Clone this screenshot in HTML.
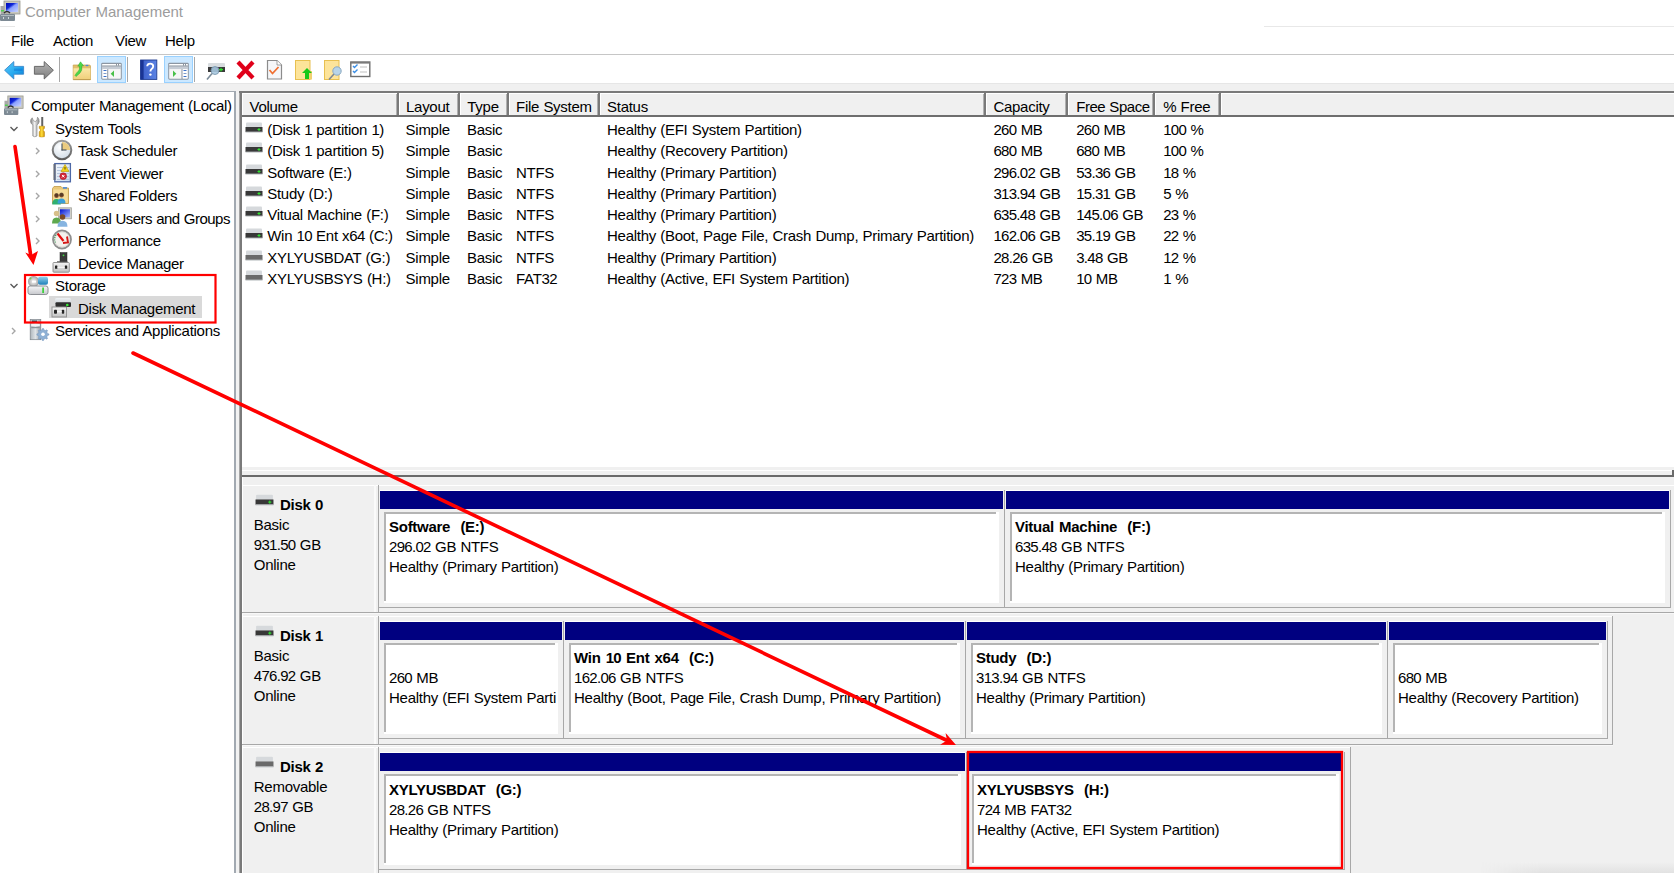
<!DOCTYPE html>
<html><head><meta charset="utf-8"><style>
html,body{margin:0;padding:0;}
body{width:1674px;height:873px;overflow:hidden;position:relative;background:#fff;font-family:"Liberation Sans",sans-serif;font-size:15px;color:#000;}
body div, body svg{position:absolute;}
.t{white-space:nowrap;line-height:17px;letter-spacing:-0.27px;word-spacing:0.4px;}
.n{letter-spacing:-0.7px;}
</style></head><body>
<svg style="left:0px;top:0px;" width="22" height="22" viewBox="0 0 22 22"><defs><linearGradient id="scr" x1="0" y1="0" x2="1" y2="1"><stop offset="0" stop-color="#0008b8"/><stop offset="0.35" stop-color="#1028d8"/><stop offset="0.5" stop-color="#8aa0ff"/><stop offset="1" stop-color="#c8d4ff"/></linearGradient></defs><rect x="4" y="1" width="16" height="13" fill="#c8c8c0" stroke="#9a9a90" stroke-width="0.8"/><rect x="6" y="3" width="12" height="9" fill="url(#scr)"/><rect x="0.5" y="6" width="4" height="8" fill="#a8a8a8"/><rect x="1" y="10" width="3" height="1.5" fill="#50d050"/><path d="M4 13 Q7 10 10 13" stroke="#303030" stroke-width="1.5" fill="none"/><rect x="0" y="14" width="15" height="7" rx="1" fill="#7d8a94"/><rect x="1" y="15" width="13" height="1" fill="#b0bac0"/><rect x="3" y="17" width="1" height="2" fill="#d0d8dc"/><rect x="8" y="17" width="1" height="2" fill="#d0d8dc"/></svg><div class="t" style="left:25px;top:3px;color:#9c9c9c;letter-spacing:0;">Computer Management</div><div style="left:0px;top:26px;width:15px;height:1px;background:#e6e6e6;"></div><div style="left:1264px;top:26px;width:410px;height:1px;background:#e8e8e8;"></div><div class="t" style="left:11px;top:32px;">File</div><div class="t" style="left:53px;top:32px;">Action</div><div class="t" style="left:115px;top:32px;">View</div><div class="t" style="left:165px;top:32px;">Help</div><div style="left:0px;top:54px;width:1674px;height:1px;background:#c6c6c6;"></div><svg style="left:4px;top:61px;" width="21" height="19" viewBox="0 0 21 19"><defs><linearGradient id="bk" x1="0" y1="0" x2="1" y2="1"><stop offset="0" stop-color="#5ccaf8"/><stop offset="0.6" stop-color="#22a6ee"/><stop offset="1" stop-color="#0a78d0"/></linearGradient></defs><path d="M0.6 9.2 L9.8 0.6 L9.8 5.4 L19.6 5.4 L19.6 13.2 L9.8 13.2 L9.8 18 Z" fill="url(#bk)" stroke="#3a88cc" stroke-width="0.9" stroke-linejoin="round"/><rect x="10" y="7.5" width="8.5" height="2.5" fill="#0a6ed0" opacity="0.45"/></svg><svg style="left:33px;top:61px;" width="21" height="19" viewBox="0 0 21 19"><defs><linearGradient id="fw" x1="0" y1="0" x2="0" y2="1"><stop offset="0" stop-color="#b4b4b4"/><stop offset="1" stop-color="#7e7e7e"/></linearGradient></defs><path d="M20.4 9.2 L11.2 0.6 L11.2 5.4 L1.4 5.4 L1.4 13.2 L11.2 13.2 L11.2 18 Z" fill="url(#fw)" stroke="#5e5e5e" stroke-width="0.9" stroke-linejoin="round"/></svg><div style="left:59px;top:57px;width:1px;height:25px;background:#a8a8a8;"></div><svg style="left:72px;top:61px;" width="20" height="20" viewBox="0 0 20 20"><defs><linearGradient id="fuf" x1="0" y1="0" x2="0" y2="1"><stop offset="0" stop-color="#fbe7a6"/><stop offset="1" stop-color="#f0cf7a"/></linearGradient></defs><path d="M1.2 4 L17.8 4 L18.5 5 L18.5 18.7 L1.2 18.7 Z" fill="#e2bf6a" stroke="#c9a24e" stroke-width="0.7"/><rect x="1.5" y="7.3" width="16.8" height="11.2" fill="url(#fuf)"/><rect x="1.3" y="18" width="17.2" height="0.8" fill="#b8954a"/><ellipse cx="15" cy="4.5" rx="1.6" ry="0.8" fill="#4a88d8"/><path d="M3 14.5 Q4.5 11.5 6.5 10 Q8 8.5 7.5 5 L5.8 5.2 L8.5 0.8 L11.5 4.8 L9.8 4.8 Q10.5 9.5 8 12 Q6 13.8 4 15.5 Z" fill="#4ad84a" stroke="#2aa82a" stroke-width="0.5"/></svg><div style="left:97px;top:56px;width:29px;height:27px;background:#cce8ff;box-sizing:border-box;border:1px solid #99d1ff;"></div><svg style="left:101px;top:62px;" width="22" height="19" viewBox="0 0 22 19"><rect x="0.8" y="1.3" width="19.4" height="15.8" rx="0.8" fill="#f2f2f2" stroke="#8c96a2" stroke-width="1.2"/><rect x="1.4" y="2" width="18.2" height="1.6" fill="#ffffff"/><rect x="1.4" y="3.6" width="18.2" height="1" fill="#6e7a88"/><rect x="1.4" y="4.6" width="18.2" height="2.6" fill="#c6ccd4"/><rect x="15" y="2" width="0.8" height="1.6" fill="#6e7a88"/><rect x="17" y="2" width="0.8" height="1.6" fill="#6e7a88"/><rect x="1.4" y="7.2" width="5" height="9.3" fill="#ffffff"/><rect x="6.4" y="7.2" width="1" height="9.5" fill="#6e7a88"/><rect x="7.4" y="7.2" width="12.2" height="9.3" fill="#f6f6f6"/><rect x="2.5" y="8" width="3" height="1" fill="#3a70c8"/><rect x="2.5" y="11" width="3" height="1" fill="#7d9ccc"/><rect x="2.5" y="14" width="3" height="1" fill="#3a70c8"/><path d="M13 8.5 L9.7 11.8 L13 15.1 Z" fill="#48c048"/></svg><div style="left:127px;top:57px;width:1px;height:25px;background:#a8a8a8;"></div><svg style="left:140px;top:59px;" width="18" height="21" viewBox="0 0 18 21"><defs><linearGradient id="hp" x1="0" y1="0" x2="1" y2="0"><stop offset="0" stop-color="#3a5cc8"/><stop offset="1" stop-color="#5c84e4"/></linearGradient></defs><rect x="0.6" y="1" width="16.2" height="19.4" fill="url(#hp)" stroke="#203c90" stroke-width="0.9"/><rect x="0.6" y="1" width="3" height="19.4" fill="#1a3494"/><path d="M7.2 7.2 Q7.4 4.6 10.2 4.6 Q13.2 4.6 13.2 7.3 Q13.2 9 11.6 10 Q10.4 10.8 10.4 12.6" fill="none" stroke="#ffffff" stroke-width="1.9"/><circle cx="10.4" cy="15.6" r="1.2" fill="#ffffff"/></svg><div style="left:164px;top:56px;width:29px;height:27px;background:#cce8ff;box-sizing:border-box;border:1px solid #99d1ff;"></div><svg style="left:168px;top:62px;" width="22" height="19" viewBox="0 0 22 19"><rect x="0.8" y="1.3" width="19.4" height="15.8" rx="0.8" fill="#f2f2f2" stroke="#8c96a2" stroke-width="1.2"/><rect x="1.4" y="2" width="18.2" height="1.6" fill="#ffffff"/><rect x="1.4" y="3.6" width="18.2" height="1" fill="#6e7a88"/><rect x="1.4" y="4.6" width="18.2" height="2.6" fill="#c6ccd4"/><rect x="15" y="2" width="0.8" height="1.6" fill="#6e7a88"/><rect x="17" y="2" width="0.8" height="1.6" fill="#6e7a88"/><rect x="1.4" y="7.2" width="12.2" height="9.3" fill="#f6f6f6"/><rect x="13.6" y="7.2" width="1" height="9.5" fill="#6e7a88"/><rect x="14.6" y="7.2" width="5" height="9.3" fill="#ffffff"/><rect x="15.5" y="8" width="3" height="1" fill="#3a70c8"/><rect x="15.5" y="11" width="3" height="1" fill="#7d9ccc"/><rect x="15.5" y="14" width="3" height="1" fill="#3a70c8"/><path d="M5 8.5 L8.3 11.8 L5 15.1 Z" fill="#48c048"/></svg><div style="left:194px;top:57px;width:1px;height:25px;background:#a8a8a8;"></div><svg style="left:206px;top:62px;" width="21" height="19" viewBox="0 0 21 19"><rect x="2" y="1" width="17" height="5" rx="1" fill="#d8dcdf"/><rect x="2" y="5" width="17" height="5" fill="#3a3a3a"/><rect x="13" y="7" width="4" height="1.2" fill="#30e030"/><rect x="14.4" y="5.8" width="1.2" height="3.6" fill="#30e030"/><circle cx="9" cy="8.5" r="4" fill="#a8c8e0" stroke="#7a98b0" stroke-width="1" opacity="0.9"/><line x1="6" y1="11.5" x2="1" y2="17.5" stroke="#7a8a98" stroke-width="1.6"/></svg><svg style="left:236px;top:60px;" width="19" height="20" viewBox="0 0 19 20"><path d="M2 2 L17 18 M17 2 L2 18" stroke="#e0001a" stroke-width="4.2"/></svg><svg style="left:266px;top:59px;" width="17" height="21" viewBox="0 0 17 21"><path d="M1.5 1.5 L11 1.5 L15.5 6 L15.5 20 L1.5 20 Z" fill="#f6f7f9" stroke="#8c8c8c" stroke-width="1.2"/><path d="M11 1.5 L11 6 L15.5 6" fill="#ffffff" stroke="#8c8c8c" stroke-width="0.8"/><path d="M3.5 11 L6.5 14.5 L12.5 8" fill="none" stroke="#f07032" stroke-width="1.8"/></svg><svg style="left:294px;top:59px;" width="19" height="21" viewBox="0 0 19 21"><rect x="1.5" y="1.5" width="14.5" height="19" fill="#fde49a" stroke="#e8c050" stroke-width="1"/><rect x="16" y="12" width="2" height="8.5" fill="#f0d070"/><path d="M13 9 L18 14 L15 14 L15 20 L11 20 L11 14 L8 14 Z" fill="#18c818"/></svg><svg style="left:323px;top:59px;" width="19" height="21" viewBox="0 0 19 21"><rect x="1.5" y="1.5" width="14.5" height="19" fill="#fde49a" stroke="#e8c050" stroke-width="1"/><line x1="11" y1="15" x2="6" y2="20.5" stroke="#808890" stroke-width="1.6"/><circle cx="14" cy="12" r="4.2" fill="#b8d4e8" stroke="#8aa8c0" stroke-width="1"/></svg><svg style="left:350px;top:61px;" width="21" height="17" viewBox="0 0 21 17"><rect x="0.8" y="1" width="19" height="14.5" fill="#ffffff" stroke="#6e6e6e" stroke-width="1.4"/><rect x="0.8" y="1" width="19" height="1.6" fill="#7a7a7a"/><path d="M3 5 L4.5 6.5 L7.5 3.5" fill="none" stroke="#3a8ee6" stroke-width="1.4"/><path d="M3 10 L4.5 11.5 L7.5 8.5" fill="none" stroke="#3a8ee6" stroke-width="1.4"/><rect x="10" y="5.5" width="7" height="1" fill="#c0c0c0"/><rect x="10" y="10.5" width="7" height="1" fill="#c0c0c0"/></svg><div style="left:0px;top:83px;width:1674px;height:8px;background:#f0f0f0;"></div><div style="left:0px;top:83px;width:1674px;height:1px;background:#e6e6e6;"></div><div style="left:0px;top:91px;width:236px;height:782px;background:#a2a9b1;"></div><div style="left:0px;top:92px;width:234px;height:781px;background:#ffffff;"></div><div style="left:236px;top:91px;width:4px;height:782px;background:#f2f2f2;"></div><svg style="left:4px;top:95px;" width="21" height="21" viewBox="0 0 22 22"><defs><linearGradient id="scr" x1="0" y1="0" x2="1" y2="1"><stop offset="0" stop-color="#0008b8"/><stop offset="0.35" stop-color="#1028d8"/><stop offset="0.5" stop-color="#8aa0ff"/><stop offset="1" stop-color="#c8d4ff"/></linearGradient></defs><rect x="4" y="1" width="16" height="13" fill="#c8c8c0" stroke="#9a9a90" stroke-width="0.8"/><rect x="6" y="3" width="12" height="9" fill="url(#scr)"/><rect x="0.5" y="6" width="4" height="8" fill="#a8a8a8"/><rect x="1" y="10" width="3" height="1.5" fill="#50d050"/><path d="M4 13 Q7 10 10 13" stroke="#303030" stroke-width="1.5" fill="none"/><rect x="0" y="14" width="15" height="7" rx="1" fill="#7d8a94"/><rect x="1" y="15" width="13" height="1" fill="#b0bac0"/><rect x="3" y="17" width="1" height="2" fill="#d0d8dc"/><rect x="8" y="17" width="1" height="2" fill="#d0d8dc"/></svg><div class="t" style="left:31px;top:97px;letter-spacing:-0.28px;">Computer Management (Local)</div><svg style="left:9px;top:126px;" width="10" height="6" viewBox="0 0 10 6"><polyline points="1.5,1 5,4.5 8.5,1" fill="none" stroke="#5a5a5a" stroke-width="1.4"/></svg><svg style="left:29px;top:116px;" width="17" height="22" viewBox="0 0 17 22"><defs><linearGradient id="wr" x1="0" y1="0" x2="1" y2="0"><stop offset="0" stop-color="#7c7c7c"/><stop offset="0.45" stop-color="#f2f2f2"/><stop offset="1" stop-color="#8a8a8a"/></linearGradient><linearGradient id="sd" x1="0" y1="0" x2="1" y2="0"><stop offset="0" stop-color="#d89a00"/><stop offset="0.5" stop-color="#ffe040"/><stop offset="1" stop-color="#c88800"/></linearGradient><linearGradient id="sh" x1="0" y1="0" x2="1" y2="0"><stop offset="0" stop-color="#9a9a9a"/><stop offset="1" stop-color="#4a4a4a"/></linearGradient></defs><path d="M3.2 1.8 Q1.2 3.5 1.6 6 Q2.2 8.2 3.8 8.8 L3.8 20 Q5.8 21.6 8 20 L8 8.8 Q9.8 8 10.2 5.6 Q10.4 3 8.5 1.2 L8 4.2 L6.2 5.6 L4.4 4.6 Z" fill="url(#wr)" stroke="#7a7a7a" stroke-width="0.6"/><rect x="12" y="1" width="2.2" height="9.5" fill="url(#sh)"/><path d="M10.2 10.2 L15.5 10.2 L15.5 12.3 L14.4 13.6 L14.4 14.6 L15.5 15.8 L15.5 20.6 Q12.9 21.6 10.2 20.6 L10.2 15.8 L11.3 14.6 L11.3 13.6 L10.2 12.3 Z" fill="url(#sd)" stroke="#b07800" stroke-width="0.4"/></svg><div class="t" style="left:55px;top:120px;">System Tools</div><svg style="left:35px;top:147px;" width="6" height="9" viewBox="0 0 6 9"><polyline points="1,1 4,4 1,7" fill="none" stroke="#a6a6a6" stroke-width="1.4"/></svg><svg style="left:51px;top:139px;" width="22" height="22" viewBox="0 0 22 22"><defs><radialGradient id="clf" cx="0.4" cy="0.35" r="0.7"><stop offset="0" stop-color="#ffffff"/><stop offset="1" stop-color="#cfdbe6"/></radialGradient><linearGradient id="clr" x1="0" y1="0" x2="0" y2="1"><stop offset="0" stop-color="#9a9a9a"/><stop offset="1" stop-color="#5e5e5e"/></linearGradient></defs><circle cx="11" cy="11" r="9.3" fill="url(#clf)" stroke="url(#clr)" stroke-width="2"/><path d="M11 11 L11 2.9 A8.1 8.1 0 0 1 19.1 11 Z" fill="#eacb80"/><line x1="11" y1="4.5" x2="11" y2="11.5" stroke="#46525e" stroke-width="1.1"/><line x1="10.5" y1="11" x2="15.5" y2="11" stroke="#46525e" stroke-width="1.1"/></svg><div class="t" style="left:78px;top:142px;">Task Scheduler</div><svg style="left:35px;top:170px;" width="6" height="9" viewBox="0 0 6 9"><polyline points="1,1 4,4 1,7" fill="none" stroke="#a6a6a6" stroke-width="1.4"/></svg><svg style="left:51px;top:162px;" width="22" height="22" viewBox="0 0 22 22"><defs><linearGradient id="evb" x1="0" y1="0" x2="1" y2="1"><stop offset="0" stop-color="#f4f8fc"/><stop offset="1" stop-color="#c8d8ec"/></linearGradient></defs><rect x="3.8" y="1.6" width="15.6" height="18.2" fill="url(#evb)" stroke="#4d68a6" stroke-width="1.3"/><rect x="6" y="5" width="12" height="0.8" fill="#a9bcd8"/><rect x="6" y="8" width="12" height="0.8" fill="#a9bcd8"/><rect x="6" y="11" width="12" height="0.8" fill="#a9bcd8"/><rect x="6" y="14" width="12" height="0.8" fill="#a9bcd8"/><rect x="6" y="17" width="12" height="0.8" fill="#a9bcd8"/><path d="M2 3h3M2 5h3M2 7h3M2 9h3M2 11h3M2 13h3M2 15h3M2 17h3" stroke="#5a5a5a" stroke-width="1"/><path d="M14 2.5 L18 9.5 L10 9.5 Z" fill="#f2d21a" stroke="#b89800" stroke-width="0.6"/><rect x="13.5" y="5" width="1" height="2.5" fill="#5a4a00"/><circle cx="12.2" cy="14.2" r="3.4" fill="#d42a3a" stroke="#a01020" stroke-width="0.5"/><path d="M11 13 L13.4 15.4 M13.4 13 L11 15.4" stroke="#fff" stroke-width="1"/></svg><div class="t" style="left:78px;top:165px;">Event Viewer</div><svg style="left:35px;top:192px;" width="6" height="9" viewBox="0 0 6 9"><polyline points="1,1 4,4 1,7" fill="none" stroke="#a6a6a6" stroke-width="1.4"/></svg><svg style="left:51px;top:184px;" width="22" height="22" viewBox="0 0 22 22"><path d="M1.5 4.5 L1.5 19.5 L17.5 19.5 L17.5 4 L11.5 4 L10 2.5 L3 2.5 Z" fill="#eac878" stroke="#c09a48" stroke-width="0.8"/><rect x="2.3" y="5.5" width="14.5" height="13.4" fill="#f6dc98"/><rect x="12" y="3" width="4" height="1.8" fill="#5a90d0"/><circle cx="5.5" cy="11.8" r="2.3" fill="#8a5530"/><circle cx="5.5" cy="11" r="2" fill="#3a2a20" opacity="0.6"/><circle cx="10.5" cy="11.3" r="2.3" fill="#8a5530"/><circle cx="10.5" cy="10.5" r="2" fill="#3a2a20" opacity="0.6"/><path d="M1.2 20.5 Q1.2 15 5.5 15 Q9.8 15 9.8 20.5 Z" fill="#2eb070"/><path d="M6.5 19.5 Q6.5 14.5 10.5 14.5 Q14.5 14.5 14.5 19.5 Z" fill="#3a9ed8"/></svg><div class="t" style="left:78px;top:187px;">Shared Folders</div><svg style="left:35px;top:215px;" width="6" height="9" viewBox="0 0 6 9"><polyline points="1,1 4,4 1,7" fill="none" stroke="#a6a6a6" stroke-width="1.4"/></svg><svg style="left:51px;top:207px;" width="22" height="22" viewBox="0 0 22 22"><rect x="7.5" y="0.8" width="13" height="11" fill="#cfcfc8" stroke="#a6a69e" stroke-width="0.8"/><defs><linearGradient id="usr" x1="0" y1="0" x2="1" y2="1"><stop offset="0" stop-color="#0010d0"/><stop offset="1" stop-color="#a8bcff"/></linearGradient></defs><rect x="9" y="2.3" width="10" height="8" fill="url(#usr)"/><circle cx="5.5" cy="6.5" r="2.7" fill="#d8c08a"/><path d="M1 16.5 Q1 10.5 5.5 10.5 Q10 10.5 10 16.5 Z" fill="#5ea84e"/><circle cx="11.5" cy="10" r="2.8" fill="#7a4a28"/><path d="M6.5 19.8 Q6.5 13.8 11.5 13.8 Q16.5 13.8 16.5 19.8 Z" fill="#86b4e0"/></svg><div class="t" style="left:78px;top:210px;letter-spacing:-0.5px;">Local Users and Groups</div><svg style="left:35px;top:237px;" width="6" height="9" viewBox="0 0 6 9"><polyline points="1,1 4,4 1,7" fill="none" stroke="#a6a6a6" stroke-width="1.4"/></svg><svg style="left:51px;top:229px;" width="22" height="22" viewBox="0 0 22 22"><circle cx="11" cy="10.5" r="9" fill="#f4f2ee" stroke="#8e8e8e" stroke-width="1.8"/><circle cx="11" cy="10.5" r="7.6" fill="none" stroke="#d6d6d2" stroke-width="0.8"/><path d="M4.5 13.5 A7 7 0 0 1 6 5" stroke="#3a9a5a" stroke-width="1.3" fill="none" stroke-dasharray="1 1.2"/><line x1="6.5" y1="4.5" x2="12.5" y2="12" stroke="#e41010" stroke-width="2.2"/><path d="M16 7.5 L17 13.5 L12 14" stroke="#d41818" stroke-width="1.9" fill="none"/></svg><div class="t" style="left:78px;top:232px;">Performance</div><svg style="left:51px;top:252px;" width="22" height="22" viewBox="0 0 22 22"><rect x="9" y="0.5" width="7" height="10" fill="#3a3a3a" stroke="#262626" stroke-width="0.5"/><circle cx="12.5" cy="3.3" r="0.9" fill="#40e040"/><rect x="6" y="9.3" width="10.5" height="1.4" fill="#555"/><defs><linearGradient id="dvb" x1="0" y1="0" x2="0" y2="1"><stop offset="0" stop-color="#f4f4f4"/><stop offset="1" stop-color="#c0c0c0"/></linearGradient></defs><rect x="2" y="10.5" width="16.3" height="9.7" rx="0.8" fill="url(#dvb)" stroke="#8a8a8a" stroke-width="0.9"/><rect x="4" y="13.5" width="2.4" height="3.3" rx="0.6" fill="#222"/><rect x="13.8" y="13.5" width="2.4" height="3.3" rx="0.6" fill="#222"/><rect x="6.4" y="14.8" width="7.4" height="0.9" fill="#fff"/></svg><div class="t" style="left:78px;top:255px;">Device Manager</div><svg style="left:9px;top:283px;" width="10" height="6" viewBox="0 0 10 6"><polyline points="1.5,1 5,4.5 8.5,1" fill="none" stroke="#5a5a5a" stroke-width="1.4"/></svg><svg style="left:27px;top:275px;" width="22" height="21" viewBox="0 0 22 21"><defs><radialGradient id="cd" cx="0.5" cy="0.5" r="0.5"><stop offset="0" stop-color="#f2f2f2"/><stop offset="0.6" stop-color="#c8c8c8"/><stop offset="1" stop-color="#9c9c9c"/></radialGradient><linearGradient id="card" x1="0" y1="0" x2="0" y2="1"><stop offset="0" stop-color="#8fd0ee"/><stop offset="1" stop-color="#1d7fb8"/></linearGradient><linearGradient id="stb" x1="0" y1="0" x2="0" y2="1"><stop offset="0" stop-color="#f6f6f8"/><stop offset="1" stop-color="#c6c8cc"/></linearGradient></defs><circle cx="6.5" cy="6.5" r="5.5" fill="url(#cd)"/><circle cx="3.5" cy="3.5" r="1" fill="#7ad048"/><rect x="5" y="5.6" width="4" height="2" fill="#ffffff"/><rect x="11" y="1.8" width="10" height="8" rx="2" fill="url(#card)"/><rect x="1" y="11" width="20" height="8.5" rx="2.2" fill="url(#stb)" stroke="#8c8f94" stroke-width="1"/><rect x="15.3" y="12.5" width="1.6" height="5.5" fill="#2ed02e"/></svg><div class="t" style="left:55px;top:277px;">Storage</div><div style="left:49px;top:296px;width:153px;height:22px;background:#d9d9d9;"></div><svg style="left:51px;top:297px;" width="22" height="21" viewBox="0 0 22 21"><defs><linearGradient id="dmt" x1="0" y1="0" x2="0" y2="1"><stop offset="0" stop-color="#eef2f5"/><stop offset="1" stop-color="#c9ced3"/></linearGradient><linearGradient id="dmb" x1="0" y1="0" x2="0" y2="1"><stop offset="0" stop-color="#f4f4f4"/><stop offset="1" stop-color="#c4c4c4"/></linearGradient></defs><rect x="4" y="1" width="16" height="6" rx="1.5" fill="url(#dmt)"/><rect x="4.5" y="5.3" width="15.5" height="4.7" rx="1" fill="#2e2e2e"/><circle cx="16.3" cy="8" r="1.3" fill="#38e838"/><rect x="1" y="10" width="14.5" height="10" fill="url(#dmb)" stroke="#8e8e8e" stroke-width="0.9"/><rect x="3" y="12.7" width="3" height="4" rx="0.8" fill="#262626"/><rect x="10.8" y="12.7" width="2.4" height="4" rx="0.8" fill="#262626"/><rect x="6" y="14.3" width="4.8" height="0.9" fill="#ffffff"/></svg><div class="t" style="left:78px;top:300px;">Disk Management</div><svg style="left:11px;top:327px;" width="6" height="9" viewBox="0 0 6 9"><polyline points="1,1 4,4 1,7" fill="none" stroke="#a6a6a6" stroke-width="1.4"/></svg><svg style="left:29px;top:319px;" width="21" height="22" viewBox="0 0 21 22"><defs><linearGradient id="svt" x1="0" y1="0" x2="1" y2="0"><stop offset="0" stop-color="#aeb6bc"/><stop offset="0.5" stop-color="#dfe4e8"/><stop offset="1" stop-color="#9aa2a8"/></linearGradient></defs><rect x="1.2" y="0.5" width="10.6" height="20.2" fill="url(#svt)" stroke="#7c848a" stroke-width="0.7"/><rect x="3" y="1.5" width="5" height="1.5" fill="#1f4e5a"/><rect x="2.2" y="5" width="8.6" height="2" fill="#f2f4f6"/><rect x="2.2" y="8" width="8.6" height="1.2" fill="#8a9298"/><rect x="10" y="16.5" width="2.5" height="2" fill="#48d848"/><path d="M13.5 9.5 l1 0 l0.5 1.5 l1.4 0.6 l1.4 -0.8 l0.8 0.8 l-0.8 1.4 l0.6 1.4 l1.5 0.5 l0 1.2 l-1.5 0.5 l-0.6 1.4 l0.8 1.4 l-0.8 0.8 l-1.4 -0.8 l-1.4 0.6 l-0.5 1.5 l-1.2 0 l-0.5 -1.5 l-1.4 -0.6 l-1.4 0.8 l-0.8 -0.8 l0.8 -1.4 l-0.6 -1.4 l-1.5 -0.5 l0 -1.2 l1.5 -0.5 l0.6 -1.4 l-0.8 -1.4 l0.8 -0.8 l1.4 0.8 l1.4 -0.6 Z" fill="#8eb0d4" stroke="#6e90b8" stroke-width="0.5"/><circle cx="14" cy="15.3" r="1.8" fill="#ffffff"/></svg><div class="t" style="left:55px;top:322px;">Services and Applications</div><div style="left:239px;top:91px;width:1435px;height:782px;background:#7a7a7a;"></div><div style="left:239px;top:93px;width:1px;height:780px;background:#a6a6a6;"></div><div style="left:242px;top:93px;width:1432px;height:780px;background:#ffffff;"></div><div style="left:242px;top:93px;width:1432px;height:22px;background:#ffffff;"></div><div style="left:243px;top:94px;width:1431px;height:21px;background:#f0f0f0;"></div><div style="left:242px;top:115px;width:1432px;height:2px;background:#6e6e6e;"></div><div style="left:396px;top:94px;width:1px;height:21px;background:#b0b0b0;"></div><div style="left:397px;top:93px;width:2px;height:22px;background:#7a7a7a;"></div><div style="left:399px;top:94px;width:1px;height:21px;background:#ffffff;"></div><div style="left:457px;top:94px;width:1px;height:21px;background:#b0b0b0;"></div><div style="left:458px;top:93px;width:2px;height:22px;background:#7a7a7a;"></div><div style="left:460px;top:94px;width:1px;height:21px;background:#ffffff;"></div><div style="left:506px;top:94px;width:1px;height:21px;background:#b0b0b0;"></div><div style="left:507px;top:93px;width:2px;height:22px;background:#7a7a7a;"></div><div style="left:509px;top:94px;width:1px;height:21px;background:#ffffff;"></div><div style="left:597px;top:94px;width:1px;height:21px;background:#b0b0b0;"></div><div style="left:598px;top:93px;width:2px;height:22px;background:#7a7a7a;"></div><div style="left:600px;top:94px;width:1px;height:21px;background:#ffffff;"></div><div style="left:983px;top:94px;width:1px;height:21px;background:#b0b0b0;"></div><div style="left:984px;top:93px;width:2px;height:22px;background:#7a7a7a;"></div><div style="left:986px;top:94px;width:1px;height:21px;background:#ffffff;"></div><div style="left:1065px;top:94px;width:1px;height:21px;background:#b0b0b0;"></div><div style="left:1066px;top:93px;width:2px;height:22px;background:#7a7a7a;"></div><div style="left:1068px;top:94px;width:1px;height:21px;background:#ffffff;"></div><div style="left:1152px;top:94px;width:1px;height:21px;background:#b0b0b0;"></div><div style="left:1153px;top:93px;width:2px;height:22px;background:#7a7a7a;"></div><div style="left:1155px;top:94px;width:1px;height:21px;background:#ffffff;"></div><div style="left:1218px;top:94px;width:1px;height:21px;background:#b0b0b0;"></div><div style="left:1219px;top:93px;width:2px;height:22px;background:#7a7a7a;"></div><div style="left:1221px;top:94px;width:1px;height:21px;background:#ffffff;"></div><div class="t" style="left:249.5px;top:98px;">Volume</div><div class="t" style="left:406px;top:98px;">Layout</div><div class="t" style="left:467.3px;top:98px;">Type</div><div class="t" style="left:516px;top:98px;">File System</div><div class="t" style="left:607px;top:98px;">Status</div><div class="t" style="left:993.4px;top:98px;">Capacity</div><div class="t" style="left:1076.2px;top:98px;letter-spacing:-0.45px;">Free Space</div><div class="t" style="left:1163.2px;top:98px;">% Free</div><svg style="left:245px;top:122px;" width="18" height="11" viewBox="0 0 18 11"><rect x="1" y="0.5" width="16" height="6" rx="1" fill="#d6d9dc"/><rect x="0.5" y="5" width="17" height="5" fill="#383838"/><rect x="0.5" y="9.6" width="17" height="1" fill="#bfc3c6"/><rect x="12.5" y="7" width="3" height="1" fill="#30e030"/><rect x="13.5" y="6" width="1" height="3" fill="#30e030"/></svg><div class="t" style="left:267.2px;top:121px;">(Disk <span class="n">1</span> partition <span class="n">1</span>)</div><div class="t" style="left:405.6px;top:121px;">Simple</div><div class="t" style="left:467px;top:121px;">Basic</div><div class="t" style="left:607px;top:121px;">Healthy (EFI System Partition)</div><div class="t" style="left:993.4px;top:121px;"><span class="n">260</span> MB</div><div class="t" style="left:1076.2px;top:121px;"><span class="n">260</span> MB</div><div class="t" style="left:1163.2px;top:121px;"><span class="n">100</span> %</div><svg style="left:245px;top:142px;" width="18" height="11" viewBox="0 0 18 11"><rect x="1" y="0.5" width="16" height="6" rx="1" fill="#d6d9dc"/><rect x="0.5" y="5" width="17" height="5" fill="#383838"/><rect x="0.5" y="9.6" width="17" height="1" fill="#bfc3c6"/><rect x="12.5" y="7" width="3" height="1" fill="#30e030"/><rect x="13.5" y="6" width="1" height="3" fill="#30e030"/></svg><div class="t" style="left:267.2px;top:142px;">(Disk <span class="n">1</span> partition <span class="n">5</span>)</div><div class="t" style="left:405.6px;top:142px;">Simple</div><div class="t" style="left:467px;top:142px;">Basic</div><div class="t" style="left:607px;top:142px;">Healthy (Recovery Partition)</div><div class="t" style="left:993.4px;top:142px;"><span class="n">680</span> MB</div><div class="t" style="left:1076.2px;top:142px;"><span class="n">680</span> MB</div><div class="t" style="left:1163.2px;top:142px;"><span class="n">100</span> %</div><svg style="left:245px;top:164px;" width="18" height="11" viewBox="0 0 18 11"><rect x="1" y="0.5" width="16" height="6" rx="1" fill="#d6d9dc"/><rect x="0.5" y="5" width="17" height="5" fill="#383838"/><rect x="0.5" y="9.6" width="17" height="1" fill="#bfc3c6"/><rect x="12.5" y="7" width="3" height="1" fill="#30e030"/><rect x="13.5" y="6" width="1" height="3" fill="#30e030"/></svg><div class="t" style="left:267.2px;top:164px;">Software (E:)</div><div class="t" style="left:405.6px;top:164px;">Simple</div><div class="t" style="left:467px;top:164px;">Basic</div><div class="t" style="left:516px;top:164px;">NTFS</div><div class="t" style="left:607px;top:164px;">Healthy (Primary Partition)</div><div class="t" style="left:993.4px;top:164px;"><span class="n">296.02</span> GB</div><div class="t" style="left:1076.2px;top:164px;"><span class="n">53.36</span> GB</div><div class="t" style="left:1163.2px;top:164px;"><span class="n">18</span> %</div><svg style="left:245px;top:186px;" width="18" height="11" viewBox="0 0 18 11"><rect x="1" y="0.5" width="16" height="6" rx="1" fill="#d6d9dc"/><rect x="0.5" y="5" width="17" height="5" fill="#383838"/><rect x="0.5" y="9.6" width="17" height="1" fill="#bfc3c6"/><rect x="12.5" y="7" width="3" height="1" fill="#30e030"/><rect x="13.5" y="6" width="1" height="3" fill="#30e030"/></svg><div class="t" style="left:267.2px;top:185px;">Study (D:)</div><div class="t" style="left:405.6px;top:185px;">Simple</div><div class="t" style="left:467px;top:185px;">Basic</div><div class="t" style="left:516px;top:185px;">NTFS</div><div class="t" style="left:607px;top:185px;">Healthy (Primary Partition)</div><div class="t" style="left:993.4px;top:185px;"><span class="n">313.94</span> GB</div><div class="t" style="left:1076.2px;top:185px;"><span class="n">15.31</span> GB</div><div class="t" style="left:1163.2px;top:185px;"><span class="n">5</span> %</div><svg style="left:245px;top:206px;" width="18" height="11" viewBox="0 0 18 11"><rect x="1" y="0.5" width="16" height="6" rx="1" fill="#d6d9dc"/><rect x="0.5" y="5" width="17" height="5" fill="#383838"/><rect x="0.5" y="9.6" width="17" height="1" fill="#bfc3c6"/><rect x="12.5" y="7" width="3" height="1" fill="#30e030"/><rect x="13.5" y="6" width="1" height="3" fill="#30e030"/></svg><div class="t" style="left:267.2px;top:206px;">Vitual Machine (F:)</div><div class="t" style="left:405.6px;top:206px;">Simple</div><div class="t" style="left:467px;top:206px;">Basic</div><div class="t" style="left:516px;top:206px;">NTFS</div><div class="t" style="left:607px;top:206px;">Healthy (Primary Partition)</div><div class="t" style="left:993.4px;top:206px;"><span class="n">635.48</span> GB</div><div class="t" style="left:1076.2px;top:206px;"><span class="n">145.06</span> GB</div><div class="t" style="left:1163.2px;top:206px;"><span class="n">23</span> %</div><svg style="left:245px;top:228px;" width="18" height="11" viewBox="0 0 18 11"><rect x="1" y="0.5" width="16" height="6" rx="1" fill="#d6d9dc"/><rect x="0.5" y="5" width="17" height="5" fill="#383838"/><rect x="0.5" y="9.6" width="17" height="1" fill="#bfc3c6"/><rect x="12.5" y="7" width="3" height="1" fill="#30e030"/><rect x="13.5" y="6" width="1" height="3" fill="#30e030"/></svg><div class="t" style="left:267.2px;top:227px;">Win <span class="n">10</span> Ent x<span class="n">64</span> (C:)</div><div class="t" style="left:405.6px;top:227px;">Simple</div><div class="t" style="left:467px;top:227px;">Basic</div><div class="t" style="left:516px;top:227px;">NTFS</div><div class="t" style="left:607px;top:227px;">Healthy (Boot, Page File, Crash Dump, Primary Partition)</div><div class="t" style="left:993.4px;top:227px;"><span class="n">162.06</span> GB</div><div class="t" style="left:1076.2px;top:227px;"><span class="n">35.19</span> GB</div><div class="t" style="left:1163.2px;top:227px;"><span class="n">22</span> %</div><svg style="left:245px;top:250px;" width="18" height="11" viewBox="0 0 18 11"><rect x="1" y="0.5" width="16" height="6" rx="1" fill="#d6d9dc"/><rect x="0.5" y="5" width="17" height="5" fill="#6a6a6a"/><rect x="0.5" y="9.6" width="17" height="1" fill="#bfc3c6"/></svg><div class="t" style="left:267.2px;top:249px;">XYLYUSBDAT (G:)</div><div class="t" style="left:405.6px;top:249px;">Simple</div><div class="t" style="left:467px;top:249px;">Basic</div><div class="t" style="left:516px;top:249px;">NTFS</div><div class="t" style="left:607px;top:249px;">Healthy (Primary Partition)</div><div class="t" style="left:993.4px;top:249px;"><span class="n">28.26</span> GB</div><div class="t" style="left:1076.2px;top:249px;"><span class="n">3.48</span> GB</div><div class="t" style="left:1163.2px;top:249px;"><span class="n">12</span> %</div><svg style="left:245px;top:270px;" width="18" height="11" viewBox="0 0 18 11"><rect x="1" y="0.5" width="16" height="6" rx="1" fill="#d6d9dc"/><rect x="0.5" y="5" width="17" height="5" fill="#6a6a6a"/><rect x="0.5" y="9.6" width="17" height="1" fill="#bfc3c6"/></svg><div class="t" style="left:267.2px;top:270px;">XYLYUSBSYS (H:)</div><div class="t" style="left:405.6px;top:270px;">Simple</div><div class="t" style="left:467px;top:270px;">Basic</div><div class="t" style="left:516px;top:270px;">FAT<span class="n">32</span></div><div class="t" style="left:607px;top:270px;">Healthy (Active, EFI System Partition)</div><div class="t" style="left:993.4px;top:270px;"><span class="n">723</span> MB</div><div class="t" style="left:1076.2px;top:270px;"><span class="n">10</span> MB</div><div class="t" style="left:1163.2px;top:270px;"><span class="n">1</span> %</div><div style="left:242px;top:467px;width:1432px;height:8px;background:#f0f0f0;"></div><div style="left:242px;top:470px;width:1432px;height:1px;background:#ffffff;"></div><div style="left:242px;top:475px;width:1432px;height:2px;background:#6a6a6a;"></div><div style="left:1672px;top:470px;width:2px;height:7px;background:#6a6a6a;"></div><div style="left:242px;top:477px;width:1432px;height:396px;background:#f0f0f0;"></div><div style="left:242px;top:477px;width:1px;height:396px;background:#ffffff;"></div><div style="left:242px;top:485px;width:1434px;height:1px;background:#ffffff;"></div><div style="left:374px;top:485px;width:2px;height:127px;background:#fafafa;"></div><div style="left:378px;top:485px;width:1px;height:127px;background:#a8a8a8;"></div><div style="left:242px;top:612px;width:1435px;height:1px;background:#a8a8a8;"></div><div style="left:242px;top:613px;width:1435px;height:1px;background:#f8f8f8;"></div><div style="left:1676px;top:485px;width:1px;height:128px;background:#a8a8a8;"></div><div style="left:378px;top:607px;width:1293px;height:1px;background:#a8a8a8;"></div><svg style="left:255px;top:494px;" width="19" height="12" viewBox="0 0 18 11"><rect x="1" y="0.5" width="16" height="6" rx="1" fill="#d6d9dc"/><rect x="0.5" y="5" width="17" height="5" fill="#383838"/><rect x="0.5" y="9.6" width="17" height="1" fill="#bfc3c6"/><rect x="12.5" y="7" width="3" height="1" fill="#30e030"/><rect x="13.5" y="6" width="1" height="3" fill="#30e030"/></svg><div class="t" style="left:280px;top:496px;font-weight:bold;">Disk <span class="n">0</span></div><div class="t" style="left:253.8px;top:516px;">Basic</div><div class="t" style="left:253.8px;top:536px;"><span class="n">931.50</span> GB</div><div class="t" style="left:253.8px;top:556px;">Online</div><div style="left:380px;top:490px;width:623px;height:1px;background:#ffffff;"></div><div style="left:380px;top:491px;width:623px;height:18px;background:#000080;"></div><div style="left:1004px;top:490px;width:1px;height:118px;background:#a8a8a8;"></div><div style="left:384px;top:512px;width:615px;height:91px;background:#fff;overflow:hidden;"><div style="position:absolute;left:0;top:0;width:2px;height:89px;background:#b4b4b4"></div><div style="position:absolute;left:0;top:0;width:612px;height:2px;background:#b4b4b4"></div><div class="t" style="left:5px;top:6px;font-weight:bold;word-spacing:1.2px;">Software&nbsp;&nbsp;(E:)</div><div class="t" style="left:5px;top:26px;"><span class="n">296.02</span> GB NTFS</div><div class="t" style="left:5px;top:46px;">Healthy (Primary Partition)</div></div><div style="left:1006px;top:490px;width:663px;height:1px;background:#ffffff;"></div><div style="left:1006px;top:491px;width:663px;height:18px;background:#000080;"></div><div style="left:1670px;top:490px;width:1px;height:118px;background:#a8a8a8;"></div><div style="left:1010px;top:512px;width:655px;height:91px;background:#fff;overflow:hidden;"><div style="position:absolute;left:0;top:0;width:2px;height:89px;background:#b4b4b4"></div><div style="position:absolute;left:0;top:0;width:652px;height:2px;background:#b4b4b4"></div><div class="t" style="left:5px;top:6px;font-weight:bold;word-spacing:1.2px;">Vitual Machine&nbsp;&nbsp;(F:)</div><div class="t" style="left:5px;top:26px;"><span class="n">635.48</span> GB NTFS</div><div class="t" style="left:5px;top:46px;">Healthy (Primary Partition)</div></div><div style="left:242px;top:616px;width:1370px;height:1px;background:#ffffff;"></div><div style="left:374px;top:616px;width:2px;height:128px;background:#fafafa;"></div><div style="left:378px;top:616px;width:1px;height:128px;background:#a8a8a8;"></div><div style="left:242px;top:744px;width:1371px;height:1px;background:#a8a8a8;"></div><div style="left:242px;top:745px;width:1371px;height:1px;background:#f8f8f8;"></div><div style="left:1612px;top:616px;width:1px;height:129px;background:#a8a8a8;"></div><div style="left:378px;top:738px;width:1230px;height:1px;background:#a8a8a8;"></div><svg style="left:255px;top:625px;" width="19" height="12" viewBox="0 0 18 11"><rect x="1" y="0.5" width="16" height="6" rx="1" fill="#d6d9dc"/><rect x="0.5" y="5" width="17" height="5" fill="#383838"/><rect x="0.5" y="9.6" width="17" height="1" fill="#bfc3c6"/><rect x="12.5" y="7" width="3" height="1" fill="#30e030"/><rect x="13.5" y="6" width="1" height="3" fill="#30e030"/></svg><div class="t" style="left:280px;top:627px;font-weight:bold;">Disk <span class="n">1</span></div><div class="t" style="left:253.8px;top:647px;">Basic</div><div class="t" style="left:253.8px;top:667px;"><span class="n">476.92</span> GB</div><div class="t" style="left:253.8px;top:687px;">Online</div><div style="left:380px;top:621px;width:182px;height:1px;background:#ffffff;"></div><div style="left:380px;top:622px;width:182px;height:18px;background:#000080;"></div><div style="left:563px;top:621px;width:1px;height:118px;background:#a8a8a8;"></div><div style="left:384px;top:643px;width:174px;height:91px;background:#fff;overflow:hidden;"><div style="position:absolute;left:0;top:0;width:2px;height:89px;background:#b4b4b4"></div><div style="position:absolute;left:0;top:0;width:171px;height:2px;background:#b4b4b4"></div><div class="t" style="left:5px;top:26px;"><span class="n">260</span> MB</div><div class="t" style="left:5px;top:46px;">Healthy (EFI System Parti</div></div><div style="left:565px;top:621px;width:399px;height:1px;background:#ffffff;"></div><div style="left:565px;top:622px;width:399px;height:18px;background:#000080;"></div><div style="left:965px;top:621px;width:1px;height:118px;background:#a8a8a8;"></div><div style="left:569px;top:643px;width:391px;height:91px;background:#fff;overflow:hidden;"><div style="position:absolute;left:0;top:0;width:2px;height:89px;background:#b4b4b4"></div><div style="position:absolute;left:0;top:0;width:388px;height:2px;background:#b4b4b4"></div><div class="t" style="left:5px;top:6px;font-weight:bold;word-spacing:1.2px;">Win <span class="n">10</span> Ent x64&nbsp;&nbsp;(C:)</div><div class="t" style="left:5px;top:26px;"><span class="n">162.06</span> GB NTFS</div><div class="t" style="left:5px;top:46px;">Healthy (Boot, Page File, Crash Dump, Primary Partition)</div></div><div style="left:967px;top:621px;width:419px;height:1px;background:#ffffff;"></div><div style="left:967px;top:622px;width:419px;height:18px;background:#000080;"></div><div style="left:1387px;top:621px;width:1px;height:118px;background:#a8a8a8;"></div><div style="left:971px;top:643px;width:411px;height:91px;background:#fff;overflow:hidden;"><div style="position:absolute;left:0;top:0;width:2px;height:89px;background:#b4b4b4"></div><div style="position:absolute;left:0;top:0;width:408px;height:2px;background:#b4b4b4"></div><div class="t" style="left:5px;top:6px;font-weight:bold;word-spacing:1.2px;">Study&nbsp;&nbsp;(D:)</div><div class="t" style="left:5px;top:26px;"><span class="n">313.94</span> GB NTFS</div><div class="t" style="left:5px;top:46px;">Healthy (Primary Partition)</div></div><div style="left:1389px;top:621px;width:217px;height:1px;background:#ffffff;"></div><div style="left:1389px;top:622px;width:217px;height:18px;background:#000080;"></div><div style="left:1607px;top:621px;width:1px;height:118px;background:#a8a8a8;"></div><div style="left:1393px;top:643px;width:209px;height:91px;background:#fff;overflow:hidden;"><div style="position:absolute;left:0;top:0;width:2px;height:89px;background:#b4b4b4"></div><div style="position:absolute;left:0;top:0;width:206px;height:2px;background:#b4b4b4"></div><div class="t" style="left:5px;top:26px;"><span class="n">680</span> MB</div><div class="t" style="left:5px;top:46px;">Healthy (Recovery Partition)</div></div><div style="left:242px;top:747px;width:1108px;height:1px;background:#ffffff;"></div><div style="left:374px;top:747px;width:2px;height:129px;background:#fafafa;"></div><div style="left:378px;top:747px;width:1px;height:129px;background:#a8a8a8;"></div><div style="left:242px;top:876px;width:1109px;height:1px;background:#a8a8a8;"></div><div style="left:242px;top:877px;width:1109px;height:1px;background:#f8f8f8;"></div><div style="left:1350px;top:747px;width:1px;height:130px;background:#a8a8a8;"></div><div style="left:378px;top:869px;width:967px;height:1px;background:#a8a8a8;"></div><svg style="left:255px;top:756px;" width="19" height="12" viewBox="0 0 18 11"><rect x="1" y="0.5" width="16" height="6" rx="1" fill="#d6d9dc"/><rect x="0.5" y="5" width="17" height="5" fill="#6a6a6a"/><rect x="0.5" y="9.6" width="17" height="1" fill="#bfc3c6"/></svg><div class="t" style="left:280px;top:758px;font-weight:bold;">Disk <span class="n">2</span></div><div class="t" style="left:253.8px;top:778px;">Removable</div><div class="t" style="left:253.8px;top:798px;"><span class="n">28.97</span> GB</div><div class="t" style="left:253.8px;top:818px;">Online</div><div style="left:380px;top:752px;width:585px;height:1px;background:#ffffff;"></div><div style="left:380px;top:753px;width:585px;height:18px;background:#000080;"></div><div style="left:966px;top:752px;width:1px;height:118px;background:#a8a8a8;"></div><div style="left:384px;top:774px;width:577px;height:91px;background:#fff;overflow:hidden;"><div style="position:absolute;left:0;top:0;width:2px;height:89px;background:#b4b4b4"></div><div style="position:absolute;left:0;top:0;width:574px;height:2px;background:#b4b4b4"></div><div class="t" style="left:5px;top:7px;font-weight:bold;word-spacing:1.2px;">XYLYUSBDAT&nbsp;&nbsp;(G:)</div><div class="t" style="left:5px;top:27px;"><span class="n">28.26</span> GB NTFS</div><div class="t" style="left:5px;top:47px;">Healthy (Primary Partition)</div></div><div style="left:968px;top:752px;width:375px;height:1px;background:#ffffff;"></div><div style="left:968px;top:753px;width:375px;height:18px;background:#000080;"></div><div style="left:1344px;top:752px;width:1px;height:118px;background:#a8a8a8;"></div><div style="left:972px;top:774px;width:367px;height:91px;background:#fff;overflow:hidden;"><div style="position:absolute;left:0;top:0;width:2px;height:89px;background:#b4b4b4"></div><div style="position:absolute;left:0;top:0;width:364px;height:2px;background:#b4b4b4"></div><div class="t" style="left:5px;top:7px;font-weight:bold;word-spacing:1.2px;">XYLYUSBSYS&nbsp;&nbsp;(H:)</div><div class="t" style="left:5px;top:27px;"><span class="n">724</span> MB FAT<span class="n">32</span></div><div class="t" style="left:5px;top:47px;">Healthy (Active, EFI System Partition)</div></div><div style="left:1480px;top:862px;width:194px;height:11px;background:linear-gradient(#f0f0f0, #e2e2e2);-webkit-mask-image:linear-gradient(90deg, transparent, #000 60px);"></div><svg style="left:0;top:0" width="1674" height="873" viewBox="0 0 1674 873"><rect x="25" y="275" width="190.5" height="47.5" fill="none" stroke="#ff0000" stroke-width="2.2"/><rect x="968" y="752" width="374" height="116" fill="none" stroke="#ff0000" stroke-width="2.3"/><line x1="15" y1="146.5" x2="30.5" y2="254" stroke="#ff0000" stroke-width="3.6" stroke-linecap="round"/><polygon points="33.5,265 25.3,252.5 31,255 38,251" fill="#ff0000"/><line x1="133" y1="353" x2="946" y2="740" stroke="#ff0000" stroke-width="3.6" stroke-linecap="round"/><polygon points="956,745 945.6,733 947,740.5 940,744.7" fill="#ff0000"/></svg>
</body></html>
